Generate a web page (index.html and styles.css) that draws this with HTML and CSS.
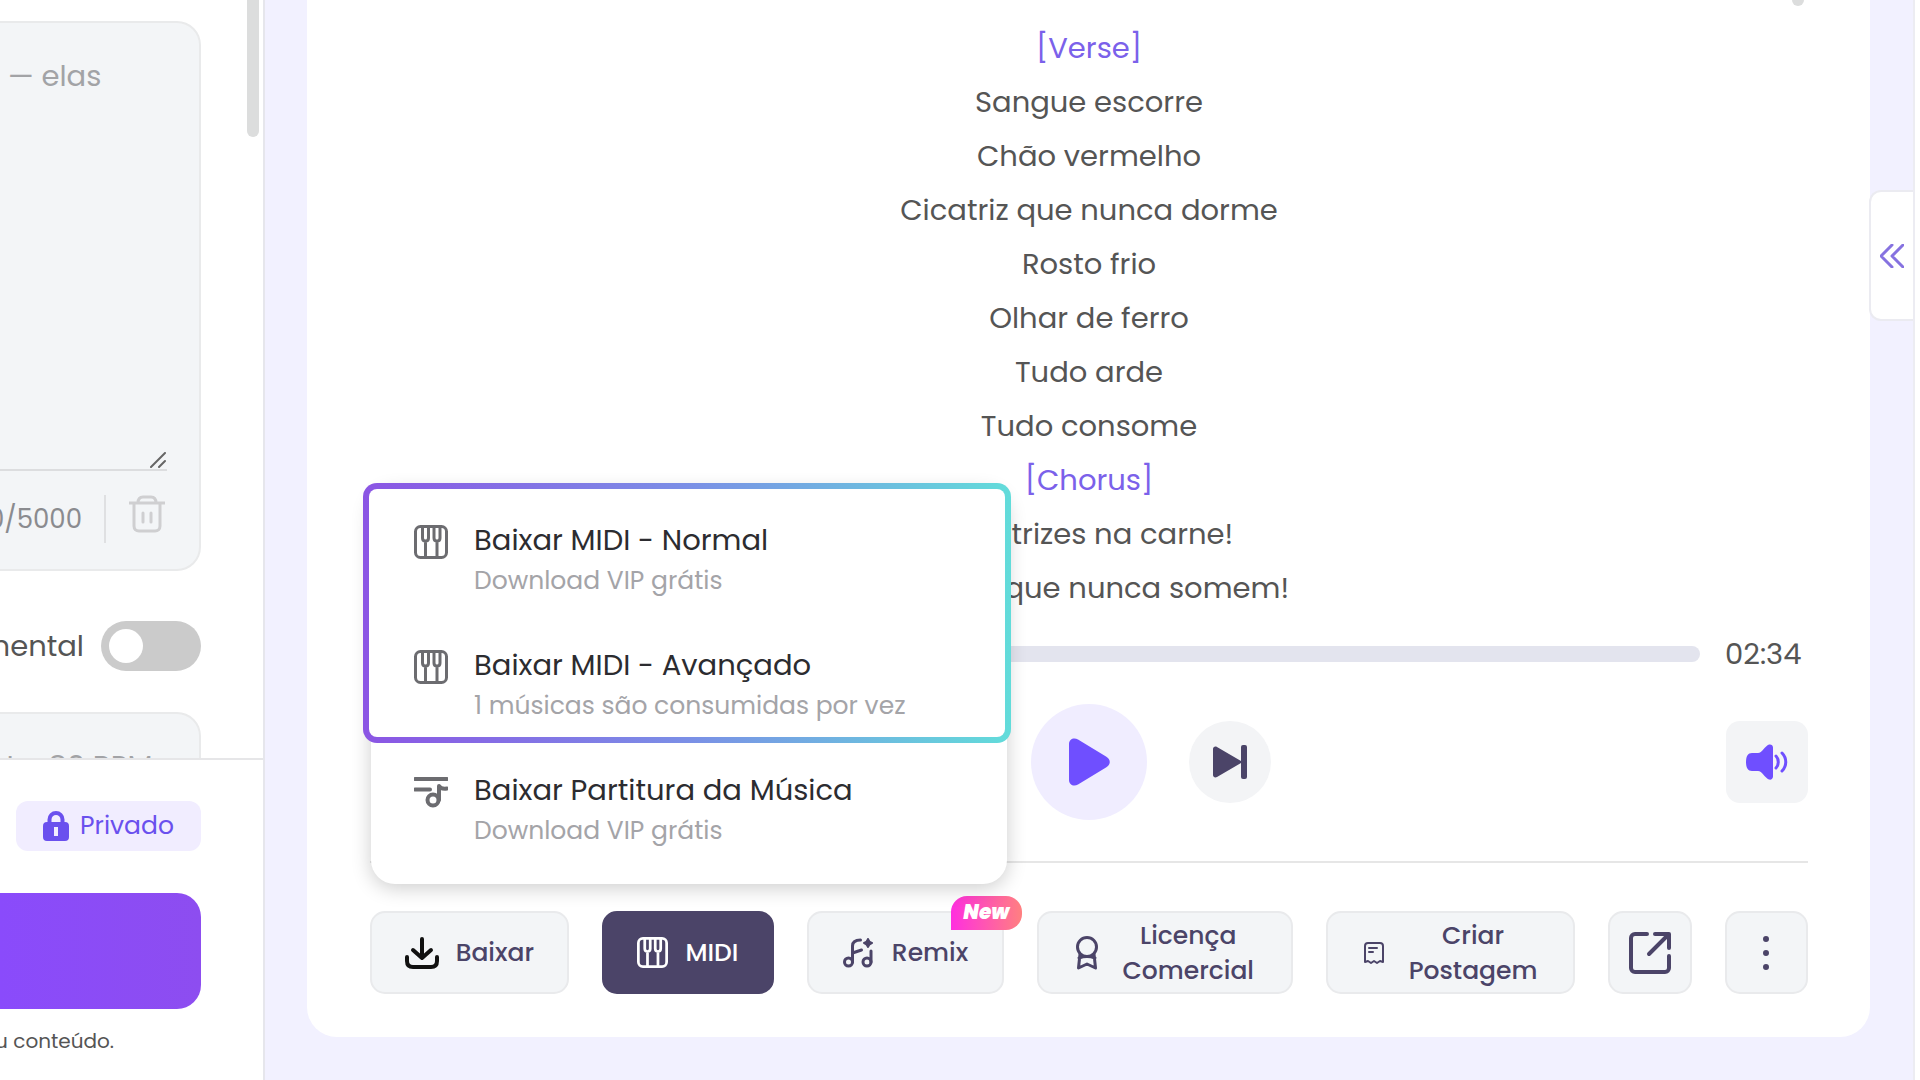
FILE: index.html
```
<!DOCTYPE html>
<html lang="pt-BR">

<head>
    <meta charset="utf-8">
    <title>Gerador de Música</title>
    <meta name="viewport" content="width=device-width, initial-scale=1">
    <link rel="stylesheet" href="styles.css">
</head>

<body>
    <svg class="sprite" aria-hidden="true">
        <symbol id="icon-piano" viewBox="0 0 34 34">
            <rect x="1.5" y="1.5" width="31" height="31" rx="5" />
            <path d="M8.5 2v11c0 2 1 3 3 3s3-1 3-3V2M20 2v11c0 2 1 3 3 3s3-1 3-3V2M11.5 16v16M23 16v16" />
        </symbol>
    </svg>

    <aside class="sidebar">
        <div class="sidebar-scroll">
            <div class="field lyrics-field">
                <div class="text-wrap">
                    <textarea class="prompt" aria-label="Letras" placeholder="— elas"></textarea>
                    <svg class="resizer" viewBox="0 0 16 16"><path d="M1 15 15 1M9 15l6-6" /></svg>
                </div>
                <div class="field-footer">
                    <span class="count">0/5000</span>
                    <button class="trash" aria-label="Limpar">
                        <svg width="36" height="38" viewBox="0 0 36 38">
                            <path d="M0 8h36M9 8c0-4 2-6 5-6h8c3 0 5 2 5 6M5 8v23c0 3 2 5 5 5h16c3 0 5-2 5-5V8" />
                            <path d="M14 18v9M22 18v9" />
                        </svg>
                    </button>
                </div>
            </div>

            <div class="toggle-row">
                <label for="instrumental">Instrumental</label>
                <input type="checkbox" class="toggle" id="instrumental">
            </div>

            <input type="text" class="field style-field" aria-label="Estilo" placeholder="to, 80 BPM">
        </div>

        <div class="sidebar-footer">
            <button class="private">
                <svg width="26" height="30" viewBox="0 0 26 30">
                    <path class="shackle" d="M6.500 13V8.500a6.500 6.500 0 0 1 13 0V13" />
                    <path fill-rule="evenodd" d="M4 11h18a4 4 0 0 1 4 4v11a4 4 0 0 1-4 4H4a4 4 0 0 1-4-4V15a4 4 0 0 1 4-4zM11 16v9h4v-9z" />
                </svg>
                Privado
            </button>
            <button class="generate" aria-label="Gerar"></button>
            <p class="notice"><span>seu conteúdo.</span></p>
        </div>
        <div class="thumb"></div>
    </aside>

    <main class="main">
        <section class="card">
            <div class="lyrics">
                <p class="tag">[Verse]</p>
                <p>Sangue escorre</p>
                <p>Chão vermelho</p>
                <p>Cicatriz que nunca dorme</p>
                <p>Rosto frio</p>
                <p>Olhar de ferro</p>
                <p>Tudo arde</p>
                <p>Tudo consome</p>
                <p class="tag">[Chorus]</p>
                <p>Cicatrizes na carne!</p>
                <p>Marcas que nunca somem!</p>
            </div>

            <div class="progress-row">
                <span class="time">00:00</span>
                <progress class="progress" value="0" max="154" aria-label="Progresso"></progress>
                <span class="time">02:34</span>
            </div>

            <div class="controls">
                <button class="round" aria-label="Anterior">
                    <svg width="34" height="34" viewBox="0 0 34 34"><path d="M33 3v28L6 17zM0 0h6v34H0z" /></svg>
                </button>
                <button class="round play" aria-label="Tocar">
                    <svg width="41" height="48" viewBox="0 0 41 48">
                        <path d="M0 6C0 1 5-1 9 1.500l28 17c5 3 5 8 0 11L9 46.500C5 49 0 47 0 42z" />
                    </svg>
                </button>
                <button class="round" aria-label="Próxima">
                    <svg width="34" height="34" viewBox="0 0 34 34">
                        <path d="M0 4c0-2 2-3 4-2l24 14V2a2 2 0 0 1 2-2h2a2 2 0 0 1 2 2v30a2 2 0 0 1-2 2h-2a2 2 0 0 1-2-2V18L4 32c-2 1-4 0-4-2z" />
                    </svg>
                </button>
                <button class="volume" aria-label="Volume">
                    <svg width="42" height="36" viewBox="0 0 42 36">
                        <path d="M6 9h6c4 0 7-7 11-8.500 2-.5 4 .5 4 3v29c0 2.500-2 3.500-4 3C19 34 16 27 12 27H6c-4 0-6-3-6-9s2-9 6-9z" />
                        <path class="wave" d="M30 12c3 3 3 9 0 12M36 9c5 5 5 13 0 18" />
                    </svg>
                </button>
            </div>

            <div class="actions">
                <button class="action">
                    <svg class="download" width="34" height="32" viewBox="0 0 34 32">
                        <path d="M17 2v18M8 13l9 8 9-8M2 20v4c0 4 2 6 6 6h18c4 0 6-2 6-6v-4" />
                    </svg>
                    <span>Baixar</span>
                </button>
                <button class="action active">
                    <svg width="31" height="31"><use href="#icon-piano" /></svg>
                    <span>MIDI</span>
                </button>
                <button class="action">
                    <svg width="32" height="30" viewBox="0 0 32 30">
                        <circle cx="5.500" cy="24" r="4" />
                        <path d="M9.500 24V8c0-4 3-6 8-6M9.500 15l9-3" />
                        <circle cx="24" cy="24" r="4" />
                        <path d="M28 24V13" />
                        <path class="star" d="M25 1c.7 2.500 1.500 3.300 4 4-2.500.7-3.300 1.500-4 4-.7-2.500-1.500-3.300-4-4 2.500-.7 3.300-1.500 4-4z" />
                    </svg>
                    <span>Remix</span>
                    <span class="badge">New</span>
                </button>
                <button class="action two-line">
                    <svg width="22" height="34" viewBox="0 0 22 34">
                        <circle cx="11" cy="11" r="9.500" />
                        <path d="M4 18 2.500 32l8.500-4 8.500 4L18 18M3 22c5-2 11-2 16 0" />
                    </svg>
                    <span>Licença Comercial</span>
                </button>
                <button class="action two-line">
                    <svg class="thin" width="20" height="22" viewBox="0 0 20 22">
                        <path d="M4 1h12a3 3 0 0 1 3 3v16l-3-1-3 2-3-2-3 2-3-2-3 1V4a3 3 0 0 1 3-3zM5 6h8M5 10h4" />
                    </svg>
                    <span>Criar Postagem</span>
                </button>
                <button class="action" aria-label="Compartilhar">
                    <svg class="share" width="42" height="42" viewBox="0 0 42 42">
                        <path d="M18 2H6a4 4 0 0 0-4 4v30a4 4 0 0 0 4 4h30a4 4 0 0 0 4-4V24M26 2h14v14M39 3 20 22" />
                    </svg>
                </button>
                <button class="action" aria-label="Mais opções">
                    <svg width="6" height="34" viewBox="0 0 6 34">
                        <path class="solid" d="M3 0a3 3 0 1 1 0 6 3 3 0 0 1 0-6zM3 14a3 3 0 1 1 0 6 3 3 0 0 1 0-6zM3 28a3 3 0 1 1 0 6 3 3 0 0 1 0-6z" />
                    </svg>
                </button>

                <div class="menu">
                    <div class="featured">
                        <button class="menu-item">
                            <svg width="34" height="34"><use href="#icon-piano" /></svg>
                            <span>
                                <span class="title">Baixar MIDI - Normal</span>
                                <span class="details">Download VIP grátis</span>
                            </span>
                        </button>
                        <button class="menu-item">
                            <svg width="34" height="34"><use href="#icon-piano" /></svg>
                            <span>
                                <span class="title">Baixar MIDI - Avançado</span>
                                <span class="details">1 músicas são consumidas por vez</span>
                            </span>
                        </button>
                    </div>
                    <button class="menu-item">
                        <svg class="sheet" width="34" height="34" viewBox="0 0 34 34">
                            <path d="M1 4h32M1 14.500h15" />
                            <circle cx="19" cy="25" r="5.500" />
                            <path d="M25 25V11c1 2 4 3 8 2.500" />
                        </svg>
                        <span>
                            <span class="title">Baixar Partitura da Música</span>
                            <span class="details">Download VIP grátis</span>
                        </span>
                    </button>
                </div>
            </div>
            <div class="thumb"></div>
        </section>

        <button class="panel-tab" aria-label="Abrir painel">
            <svg width="24" height="24" viewBox="0 0 24 24"><path d="M12 1 1 12l11 11M23 1 12 12l11 11" /></svg>
        </button>
    </main>
    <div class="edge"></div>
</body>

</html>
```

FILE: styles.css
```
* {
    box-sizing: border-box;
}

body {
    display: flex;
    height: 100vh;
    margin: 0;
    overflow: hidden;
    font-family: Poppins, Inter, sans-serif;
    font-size: 29px;
    color: #555;
    background: white;
}

button,
input,
textarea {
    margin: 0;
    padding: 0;
    border: 0;
    font: inherit;
    color: inherit;
    background: none;
}

p {
    margin: 0;
}

svg {
    flex: none;
    fill: none;
    stroke: currentColor;
    stroke-width: 3;
    stroke-linecap: round;
    stroke-linejoin: round;
}

.sprite {
    position: absolute;
    width: 0;
    height: 0;
}

/* Left sidebar, scrolled past its left edge */
.sidebar {
    position: relative;
    display: flex;
    flex-direction: column;
    flex: none;
    width: 265px;
    overflow: hidden;
    border-right: 2px solid #e6e6ec;
}

.sidebar-scroll {
    flex: 1;
    min-height: 0;
    overflow: hidden;
    padding: 21px 62px 0 0;
}

.field {
    border: 2px solid #e9eaeb;
    border-left: 0;
    border-radius: 0 24px 24px 0;
    background: #f3f5f7;
}

.lyrics-field {
    height: 550px;
    padding: 30px 32px 0 0;
}

.text-wrap {
    position: relative;
    height: 418px;
    border-bottom: 2px solid #dcdddf;
}

.prompt {
    display: block;
    width: 100%;
    height: 100%;
    padding-left: 8px;
    line-height: 46px;
    resize: none;
}

.prompt::placeholder,
.style-field::placeholder {
    color: #a2a3a6;
    opacity: 1;
}

.resizer {
    position: absolute;
    right: 1px;
    bottom: 1px;
    width: 16px;
    height: 16px;
    color: #666;
    stroke-width: 2;
}

.field-footer {
    display: flex;
    justify-content: flex-end;
    align-items: center;
    height: 96px;
}

.count {
    padding-right: 22px;
    font-size: 26px;
    line-height: 48px;
    color: #8a8b8f;
    border-right: 2px solid #dfe0e2;
}

.trash {
    display: flex;
    margin: 0 2px 10px 23px;
    color: #cfcfd1;
}

.toggle-row {
    display: flex;
    justify-content: flex-end;
    align-items: center;
    gap: 17px;
    margin: 50px 0 41px;
    line-height: 50px;
}

.toggle {
    flex: none;
    width: 100px;
    height: 50px;
    padding: 8px;
    border-radius: 25px;
    background: #cbcbcb;
    appearance: none;
}

.toggle::before {
    display: block;
    width: 34px;
    height: 34px;
    border-radius: 50%;
    background: white;
    content: "";
}

.toggle:checked {
    background: #6f4ff2;
}

.toggle:checked::before {
    margin-left: auto;
}

.style-field {
    display: block;
    width: 100%;
    height: 108px;
    padding-left: 6px;
}

.sidebar-footer {
    display: flex;
    flex-direction: column;
    align-items: flex-end;
    height: 322px;
    padding: 41px 62px 0 0;
    border-top: 2px solid #e6e6e8;
}

.private {
    display: flex;
    justify-content: center;
    align-items: center;
    gap: 11px;
    width: 185px;
    height: 50px;
    border-radius: 12px;
    font-size: 25px;
    color: #6a50ee;
    background: #f1edff;
}

.private svg {
    fill: currentColor;
    stroke: none;
}

.private .shackle {
    fill: none;
    stroke: currentColor;
    stroke-width: 4;
}

.generate {
    width: 100%;
    height: 116px;
    margin-top: 42px;
    border-radius: 0 24px 24px 0;
    background: linear-gradient(90deg, #8a4bfb, #8d4df0);
}

.notice {
    display: flex;
    justify-content: flex-end;
    width: 114px;
    margin: 16px auto 0 0;
    font-size: 20px;
    line-height: 32px;
    white-space: nowrap;
}

.thumb {
    position: absolute;
    top: -20px;
    right: 4px;
    width: 12px;
    height: 157px;
    border-radius: 6px;
    background: #dcdddd;
}

/* Player card */
.main {
    position: relative;
    display: flex;
    flex: 1;
    padding: 0 43px 43px 42px;
    background: #f2f1ff;
}

.card {
    position: relative;
    display: flex;
    flex: 1;
    flex-direction: column;
    padding: 0 62px 43px 63px;
    border-radius: 0 0 30px 30px;
    background: white;
}

.card > .thumb {
    right: 66px;
    height: 26px;
}

.lyrics {
    flex: 1;
    min-height: 0;
    padding-top: 21px;
    overflow: hidden;
    line-height: 54px;
    text-align: center;
}

.tag {
    color: #7b61ea;
}

.progress-row {
    display: flex;
    align-items: center;
    gap: 25px;
    height: 44px;
}

.time {
    width: 83px;
}

.progress {
    flex: 1;
    height: 16px;
    border: 0;
    border-radius: 8px;
    overflow: hidden;
    appearance: none;
}

.progress::-webkit-progress-bar {
    background: #e3e4ee;
}

.controls {
    position: relative;
    display: flex;
    justify-content: center;
    align-items: center;
    gap: 42px;
    padding: 28px 0 41px;
    border-bottom: 2px solid #e6e6e6;
}

.controls svg {
    fill: currentColor;
    stroke: none;
}

.controls .wave {
    fill: none;
    stroke: currentColor;
}

.round,
.volume {
    display: flex;
    justify-content: center;
    align-items: center;
    width: 82px;
    height: 82px;
    border-radius: 50%;
    color: #4b4468;
    background: #f3f4f6;
}

.play {
    width: 116px;
    height: 116px;
    color: #6f4fff;
    background: #f0edff;
}

.volume {
    position: absolute;
    right: 0;
    border-radius: 14px;
    color: #6f4fff;
}

.actions {
    position: relative;
    display: grid;
    grid-template-columns: 198fr 172fr 196fr 255fr 249fr 83fr 83fr;
    gap: 33px;
    margin-top: 48px;
}

.action {
    position: relative;
    display: flex;
    justify-content: center;
    align-items: center;
    gap: 17px;
    min-width: 0;
    height: 83px;
    border: 2px solid #e9eaec;
    border-radius: 15px;
    font-size: 25px;
    font-weight: 500;
    line-height: 35px;
    color: #4b4468;
    background: #f3f5f7;
}

.two-line {
    gap: 25px;
}

.two-line span {
    width: min-content;
}

.active {
    border-color: #4b4468;
    color: white;
    background: #4b4468;
}

.download {
    stroke-width: 4;
    color: #111;
}

.share {
    stroke-width: 4;
}

.thin {
    stroke-width: 2;
}

.solid {
    fill: currentColor;
    stroke: none;
}

.star {
    fill: currentColor;
    stroke-width: 2;
}

.badge {
    position: absolute;
    top: -17px;
    right: -20px;
    width: 71px;
    height: 34px;
    border-radius: 16px 16px 16px 0;
    font-size: 20px;
    font-style: italic;
    font-weight: 900;
    line-height: 32px;
    text-align: center;
    color: white;
    background: linear-gradient(90deg, #ff2fdf, #ff8080);
}

/* MIDI download menu */
.menu {
    position: absolute;
    bottom: calc(100% + 27px);
    left: 1px;
    z-index: 1;
    width: 636px;
    padding: 9px 0 12px;
    border-radius: 24px;
    background: white;
    box-shadow: 0 4px 20px rgba(0, 0, 0, 0.2);
}

.featured {
    position: relative;
}

/* Gradient frame round the two MIDI entries */
.featured::before {
    position: absolute;
    inset: -14px -4px -4px -8px;
    z-index: -1;
    border: 6px solid transparent;
    border-radius: 14px;
    background: linear-gradient(white, white) padding-box,
        linear-gradient(90deg, #8b55e4, #7b8fe6 50%, #62dcda) border-box;
    content: "";
}

.featured .menu-item:last-child {
    height: 117px;
    margin-bottom: 8px;
}

.menu-item {
    display: flex;
    gap: 26px;
    width: 100%;
    height: 125px;
    padding: 21px 43px 0;
    text-align: left;
    color: #2c2c30;
}

.menu-item svg {
    margin-top: 7px;
    color: #6c6c70;
}

.menu-item .sheet {
    stroke-width: 4;
}

.title,
.details {
    display: block;
    line-height: 44px;
}

.details {
    font-size: 25px;
    line-height: 38px;
    color: #a4a4a8;
}

/* Right panel handle */
.panel-tab {
    position: absolute;
    top: 190px;
    right: 0;
    display: flex;
    justify-content: center;
    align-items: center;
    width: 44px;
    height: 131px;
    border: 2px solid #ebebf1;
    border-right: 0;
    border-radius: 12px 0 0 12px;
    color: #8672e0;
    background: white;
}

.edge {
    flex: none;
    width: 7px;
    border-left: 2px solid #ececf2;
}
```
